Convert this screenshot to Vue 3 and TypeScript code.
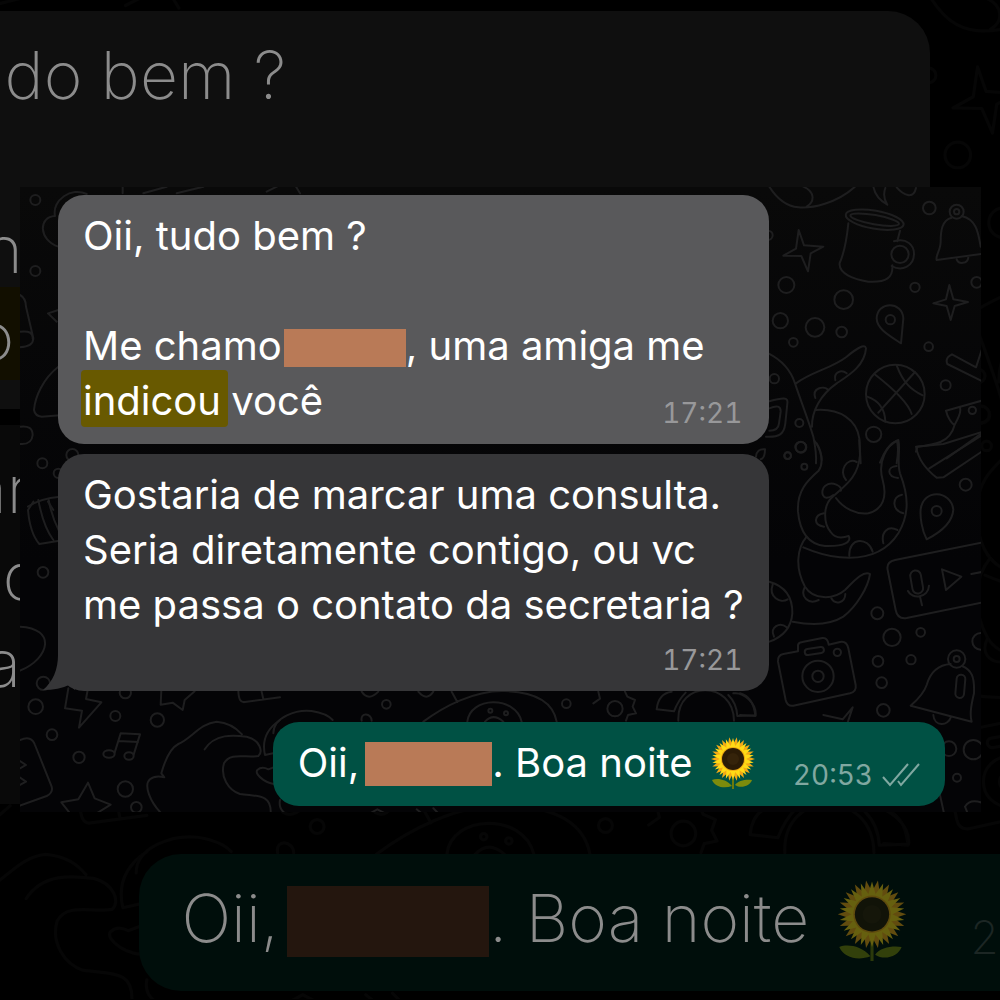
<script setup lang="ts">
type Part = { kind: 'text' | 'mark' | 'redacted' | 'flower'; value?: string }
type Message = { id: string; side: 'in' | 'out'; tone: string; time: string; lines: Part[][] }

const text = (value: string): Part => ({ kind: 'text', value })

const messages: Message[] = [
  {
    id: 'hello',
    side: 'in',
    tone: 'selected',
    time: '17:21',
    lines: [
      [text('Oii, tudo bem ?')],
      [text('\u00a0')],
      [text('Me chamo'), { kind: 'redacted' }, text(', uma amiga me')],
      [{ kind: 'mark', value: 'indicou' }, text(' você')],
    ],
  },
  {
    id: 'request',
    side: 'in',
    tone: 'plain',
    time: '17:21',
    lines: [
      [text('Gostaria de marcar uma consulta.')],
      [text('Seria diretamente contigo, ou vc')],
      [text('me passa o contato da secretaria ?')],
    ],
  },
  {
    id: 'reply',
    side: 'out',
    tone: 'sent',
    time: '20:53',
    lines: [[text('Oii,'), { kind: 'redacted' }, text('. Boa noite '), { kind: 'flower' }]],
  },
]

const layers = ['backdrop', 'panel']
const petals = Array.from({ length: 18 }, (_, i) => i * 20)
</script>

<template>
  <main class="stage">
    <svg class="defs" aria-hidden="true">
      <defs>
        <g id="doodles" fill="none" stroke-width="6" stroke-linejoin="round" stroke-linecap="round">
          <g transform="translate(740 190) scale(.33333)">
            <path d="M88-10C110 25 135 48 175 52S290 40 345-10M190-10C225 5 225 35 200 50M400-10C405 15 420 32 442 44C430 25 430 10 436-6M470-8C490 15 520 30 528-6" />
            <path d="M176 120L192 166L250 170L212 190L204 244L184 198L130 197L168 176Z" />
            <circle cx="139" cy="285" r="24" /><circle cx="311" cy="329" r="28" /><circle cx="121" cy="392" r="23" />
            <circle cx="225" cy="412" r="28" /><circle cx="305" cy="426" r="16" /><circle cx="160" cy="457" r="13" />
            <circle cx="568" cy="54" r="19" /><circle cx="525" cy="292" r="14" /><circle cx="710" cy="277" r="16" />
            <circle cx="566" cy="470" r="13" /><circle cx="617" cy="586" r="15" /><circle cx="697" cy="661" r="11" />
            <circle cx="401" cy="733" r="23" /><circle cx="178" cy="699" r="12" /><circle cx="183" cy="772" r="16" />
            <circle cx="143" cy="797" r="10" /><circle cx="103" cy="566" r="14" /><circle cx="84" cy="136" r="14" />
            <ellipse cx="404" cy="89" rx="88" ry="27" transform="rotate(10 404 89)" />
            <ellipse cx="404" cy="89" rx="74" ry="14" transform="rotate(10 404 89)" />
            <path d="M325 100C320 150 312 190 299 219C295 250 340 268 385 275C440 278 460 262 457 226M480 122L472 154" />
            <circle cx="480" cy="193" r="26" />
            <path d="M462 154C500 143 523 165 522 193C521 230 485 245 455 228" />
            <circle cx="650" cy="65" r="21" /><circle cx="650" cy="65" r="8" />
            <path d="M635 83C605 90 602 125 602 155C602 180 585 200 590 210L725 192M665 78C710 88 715 130 722 170M650 208C655 223 683 223 685 202" />
            <path d="M628 285L640 328L684 336L644 348L632 390L620 348L580 340L618 328Z" />
            <path d="M483 460C445 435 410 415 410 385C412 333 487 333 490 385Z" /><circle cx="451" cy="389" r="14" />
            <path d="M85 490C125 510 152 540 165 580C185 640 205 690 220 740C226 770 230 790 228 820M168 580C215 545 275 535 320 500C350 475 375 460 378 475C374 530 320 560 290 580C240 615 215 665 216 710M286 571C280 545 305 538 320 550M226 624C215 595 250 585 265 600M228 660C300 655 350 690 358 745L362 820M230 760Q245 785 245 810" />
            <circle cx="466" cy="612" r="88" />
            <path d="M403 552C465 600 505 640 515 672M470 526C490 580 515 600 548 616M525 546L415 668M382 620C425 635 435 665 436 695" />
            <path d="M88 634C130 622 145 622 142 640L136 700C132 735 115 742 78 740M88 655Q123 640 122 665L117 700Q115 722 88 722M725 480L708 532L636 493Q614 503 622 522L725 573M725 632L618 662C622 680 635 702 644 704C655 685 664 665 660 654M644 704C630 760 580 765 532 770L528 785M725 730L620 805M420 818Q440 765 470 752Q478 770 470 820" />
          </g>
          <g transform="translate(740 440) scale(.33333)">
            <path d="M222 0C245 30 252 70 236 92C205 120 170 150 174 215C178 260 195 312 255 318C315 320 335 305 326 288C305 295 285 295 272 276C250 250 248 195 278 170C310 140 355 115 360 45L358 0" />
            <path d="M288 174C310 205 350 225 385 220C430 208 442 170 428 120C412 65 440 15 475 0C482 30 470 65 480 100C505 165 510 220 475 280C440 335 385 360 300 352C260 348 220 335 190 322M200 290C170 325 165 385 195 440C220 480 280 480 315 450C340 425 370 390 390 402C385 440 350 500 310 530C270 555 210 555 158 545" />
            <path d="M318 120C295 95 320 50 350 66M280 165C245 190 240 150 255 138C275 120 310 140 302 152M252 260C218 255 222 225 252 220M328 348C325 290 385 290 398 335M430 310C422 275 445 255 472 270M490 220C455 210 455 170 486 164M474 114C440 110 440 80 470 78M194 442C180 470 205 495 236 480M274 475C285 495 315 490 316 462" />
            <path d="M88 425C140 440 158 475 157 520C154 560 130 590 88 605M98 434C85 470 120 492 143 478M102 590C88 560 120 545 140 562" />
            <circle cx="182" cy="21" r="16" /><circle cx="143" cy="47" r="10" /><circle cx="193" cy="80" r="9" /><circle cx="677" cy="134" r="18" />
            <path d="M48 50Q50 25 75 28Q75 55 62 58M528 20L610 12L725-24M528 20C535 60 560 90 590 113L610 112L725 35M568 85L725-14" />
            <path d="M560 298C545 270 540 230 542 208C550 145 632 150 640 208C638 245 605 275 560 298Z" /><circle cx="590" cy="213" r="15" />
            <path d="M725 308L465 360Q438 366 443 390L467 510Q472 538 500 534L725 488" />
            <rect x="514" y="391" width="32" height="70" rx="16" transform="rotate(-10 530 426)" />
            <path d="M504 453C515 478 565 475 567 437M540 470L546 496M606 388L664 410L618 450ZM694 402L725 396" />
            <circle cx="412" cy="520" r="18" /><circle cx="456" cy="592" r="26" /><circle cx="542" cy="577" r="13" /><circle cx="513" cy="659" r="14" />
            <circle cx="414" cy="664" r="16" /><circle cx="425" cy="728" r="16" /><circle cx="430" cy="811" r="19" /><circle cx="722" cy="604" r="25" />
            <path d="M130 642L174 634L174 615Q175 608 187 606L247 594Q263 592 266 614L300 606Q320 602 325 625L347 735Q350 755 330 760L160 797Q142 800 137 780L114 665Q112 646 130 642Z" />
            <rect x="194" y="624" width="58" height="18" rx="9" transform="rotate(-9 223 633)" />
            <circle cx="292" cy="637" r="11" /><circle cx="234" cy="709" r="47" /><circle cx="234" cy="709" r="17" />
            <circle cx="650" cy="657" r="26" /><circle cx="650" cy="657" r="9" />
            <path d="M632 672C590 675 570 700 560 735C550 765 520 790 512 797L695 845C688 820 695 790 702 760C704 710 695 690 666 678M580 825C582 860 625 860 633 830M250 825L308 838L338 802L322 850M0 760Q40 770 46 828L0 825" />
            <rect x="648" y="704" width="26" height="70" rx="13" transform="rotate(5 661 739)" />
          </g>
          <g transform="translate(0 180) scale(.33333)">
            <circle cx="106" cy="60" r="15" /><circle cx="106" cy="273" r="15" /><circle cx="127" cy="850" r="15" /><circle cx="217" cy="825" r="18" /><circle cx="175" cy="880" r="14" />
            <path d="M165 108C155 60 215 20 260 42M165 108C115 110 115 180 175 200M60 345Q78 355 78 380L100 475Q100 500 60 502M60 455Q100 450 98 475M175 390L144 400L170 425M175 560C130 595 105 650 102 690Q105 708 125 710L180 706M60 740Q98 735 98 765Q95 795 60 792M84 980Q120 955 180 950M144 965L160 990M368 15V40M430 40L500 20M530 40L610 20M800 35L840 15M885 15L900 40" />
          </g>
          <g transform="translate(0 500) scale(.33333)">
            <path d="M84 30Q90 100 118 132L178 122M84 30L100 5M115 0Q130 80 160 120M146 0Q155 50 178 95M60 380C170 385 150 475 60 512" />
            <circle cx="129" cy="217" r="16" /><circle cx="130" cy="550" r="20" /><circle cx="107" cy="620" r="22" /><circle cx="156" cy="704" r="16" />
            <circle cx="237" cy="772" r="17" /><circle cx="376" cy="867" r="23" /><circle cx="409" cy="922" r="16" /><circle cx="346" cy="648" r="15" /><circle cx="472" cy="660" r="20" /><circle cx="376" cy="578" r="17" />
            <path d="M205 565L195 625L246 632L237 683L304 607L258 597L263 570M484 570L482 614L518 608L548 630L554 600L584 574M715 570Q715 610 735 606L840 592M785 575L790 598" />
            <ellipse cx="327" cy="762" rx="17" ry="11" /><ellipse cx="387" cy="768" rx="14" ry="11" />
            <path d="M344 758L362 700L420 703L401 764M355 723L414 726M60 720Q95 705 105 735L155 860Q160 878 140 888L60 917M60 783L78 795L60 805M60 833L78 845L60 855" />
            <path d="M184 907L235 898L264 848L284 895L332 914L290 940M184 907L210 940M484 940C450 905 430 855 450 838Q465 825 493 832L484 820C495 780 510 745 535 732C575 715 600 670 650 665C690 668 710 685 726 703M614 748C645 700 700 705 740 710C780 720 790 755 775 768C740 775 690 755 672 790C660 830 685 870 720 882C770 890 815 880 812 940M840 660Q780 700 795 765L840 755M840 850C810 860 760 825 772 810Q785 798 805 808L840 795" />
          </g>
          <g transform="translate(270 640) scale(.33333)">
            <path d="M10 280C10 230 80 208 125 213Q170 220 188 240M460 245C520 200 610 152 700 153C800 155 850 190 860 245M545 155L562 186M592 245C600 170 735 165 755 245M645 245Q670 218 700 245M275 155Q295 185 325 155M445 155Q470 185 490 155M275 242C270 215 305 220 305 242M30 480Q25 505 45 520M300 520L322 508L345 520M440 508L455 520M490 505L505 520" />
            <circle cx="349" cy="193" r="13" /><circle cx="889" cy="191" r="13" /><circle cx="661" cy="212" r="6" /><circle cx="708" cy="220" r="6" />
          </g>
          <g transform="translate(600 640) scale(.33333)">
            <circle cx="45" cy="206" r="23" /><circle cx="1047" cy="326" r="22" /><circle cx="1120" cy="329" r="29" /><circle cx="1071" cy="413" r="12" />
            <path d="M-20 190L0 176L-5 155M75 155L82 170L105 180L98 200L108 220L84 225L78 242M215 155Q175 160 170 208L222 214Q235 180 257 158M235 242C230 120 400 120 402 242M385 165Q410 190 412 228L467 226C470 190 430 155 400 160M1020 465L1032 520M1095 500Q1110 475 1145 488M1095 500L1103 520" />
          </g>
        </g>
        <symbol id="sunflower" viewBox="0 0 46 52">
          <path d="M22 37h2v15h-2z" fill="#6c7a0b" />
          <path d="M22 49C16 42 7 41 2 43C5 50 14 52 22 49ZM25 48C28 43 37 42 42 43C40 49 31 52 25 48Z" fill="#7d8b0c" />
          <path v-for="angle in petals" :key="angle" d="M18 15L23 0L28 15Z" fill="#f4a915" :transform="`rotate(${angle + 10} 23 22)`" />
          <path v-for="angle in petals" :key="`top-${angle}`" d="M19 15L23 1L27 15Z" fill="#ffda16" :transform="`rotate(${angle} 23 22)`" />
          <circle cx="23" cy="22" r="12" fill="#eea812" />
          <circle cx="23" cy="22" r="11" fill="#2b1b06" />
          <circle cx="23" cy="22" r="6" fill="#35230a" />
        </symbol>
      </defs>
    </svg>

    <section v-for="layer in layers" :key="layer" class="layer" :class="layer" :aria-hidden="layer === 'backdrop'">
      <svg class="pattern" viewBox="20 187 961 625" preserveAspectRatio="xMidYMin slice" aria-hidden="true">
        <use href="#doodles" />
      </svg>
      <article v-for="message in messages" :key="message.id" class="bubble" :class="[message.side, message.tone]">
        <svg v-if="message.tone === 'plain'" class="tail" viewBox="0 0 32 36" aria-hidden="true">
          <path d="M15 0Q15 22 0 35Q16 35 26 30L32 35V0Z" />
        </svg>
        <div class="body">
          <p v-for="(line, i) in message.lines" :key="i" class="line">
            <template v-for="(part, j) in line" :key="j">
              <span v-if="part.kind === 'text'">{{ part.value }}</span>
              <mark v-else-if="part.kind === 'mark'">{{ part.value }}</mark>
              <span v-else-if="part.kind === 'redacted'" class="redacted"></span>
              <svg v-else class="flower" role="img" aria-label="Girassol"><use href="#sunflower" /></svg>
            </template>
          </p>
        </div>
        <footer class="meta">
          <time>{{ message.time }}</time>
          <svg v-if="message.side === 'out'" class="checks" viewBox="0 0 38 26" aria-hidden="true">
            <path d="M1 15L8 23L26 2M16 19L19 23L37 2" />
          </svg>
        </footer>
      </article>
    </section>
  </main>
</template>

<style>
body {
  background: #000;
}
</style>

<style scoped>
.stage {
  position: relative;
  min-height: 100vh;
  box-sizing: border-box;
  padding: 187px 19px 0 20px;
  overflow: hidden;
  background: #000;
  font-family: Inter, "Liberation Sans", sans-serif;
}

.defs {
  position: absolute;
  width: 0;
  height: 0;
}

.layer {
  position: relative;
  display: flex;
  flex-direction: column;
  align-items: flex-start;
  box-sizing: border-box;
  overflow: hidden;
}

.panel {
  --line: 55px;
  --pad-top: 13px;
  --pad-bottom: 16px;
  --pad-left: 25px;
  --pad-right: 27px;
  --meta-line: 30px;
  --radius: 26px;
  padding: 8px 36px 6px 38px;
  background: linear-gradient(#090909, #040406 60%);
  color: #fff;
  font-size: 40px;
}

.backdrop {
  --line: 87px;
  --pad-top: 21px;
  --pad-bottom: 29px;
  --pad-left: 40px;
  --pad-right: 45px;
  --meta-line: 50px;
  --radius: 42px;
  position: absolute;
  top: -2px;
  left: -269px;
  right: -269px;
  padding: 13px 58px 8px 61px;
  color: #8c8c8c;
  font-size: 66px;
  font-weight: 200;
}

.pattern {
  position: absolute;
  inset: 0;
  width: 100%;
  height: 100%;
  stroke: #1e1e1f;
}

.backdrop .pattern {
  stroke: #060606;
}

.bubble {
  position: relative;
  display: grid;
  grid-template-columns: 100%;
  box-sizing: border-box;
  padding: var(--pad-top) var(--pad-right) var(--pad-bottom) var(--pad-left);
  border-radius: var(--radius);
}

.in {
  width: 80.2%;
}

.selected {
  background: #59595b;
}

.plain {
  margin-top: 10px;
  row-gap: 13px;
  background: #363638;
}

.sent {
  align-self: flex-end;
  display: flex;
  align-items: flex-end;
  gap: 37px;
  margin-top: 31px;
  padding-right: 25px;
  background: #005144;
}

.body,
.meta {
  grid-column: 1;
}

.selected .body,
.selected .meta {
  grid-row: 1;
}

.line {
  height: var(--line);
  margin: 0;
  line-height: var(--line);
  white-space: pre;
}

mark {
  margin: 0 -8px 0 -2px;
  padding: 6px 7px 2px 2px;
  border-radius: 4px;
  background: #685900;
  color: inherit;
}

.redacted {
  display: inline-block;
  width: 122px;
  height: 38px;
  margin: 0 0 2px 2px;
  vertical-align: middle;
  background: #b97a57;
}

.sent .redacted {
  width: 127px;
  height: 44px;
  margin: 0 0 4px 6px;
}

.flower {
  width: 46px;
  height: 52px;
  margin: 0 0 6px 6px;
  vertical-align: middle;
}

.meta {
  display: flex;
  align-items: center;
  align-self: end;
  justify-self: end;
  gap: 9px;
  color: #98989a;
  font-size: 28px;
  font-variant-numeric: tabular-nums;
  line-height: var(--meta-line);
}

.sent .meta {
  color: #80a8a1;
}

.checks {
  width: 38px;
  height: 26px;
  fill: none;
  stroke: currentColor;
  stroke-width: 2;
}

.tail {
  position: absolute;
  left: -15px;
  bottom: 0;
  width: 32px;
  height: 36px;
  fill: #363638;
}

.backdrop .selected {
  background: #0f0f0f;
}

.backdrop .plain {
  margin-top: 16px;
  row-gap: 18px;
  background: #090909;
}

.backdrop .sent {
  gap: 62px;
  margin-top: 50px;
  padding-left: 42px;
  padding-right: 40px;
  background: #000e0b;
}

.backdrop mark {
  padding: 9px 8px 4px 2px;
  background: #120f00;
}

.backdrop .redacted {
  width: 195px;
  height: 61px;
  margin-left: 8px;
  background: #24160e;
}

.backdrop .sent .redacted {
  width: 202px;
  height: 71px;
  margin-left: 8px;
}

.backdrop .flower {
  width: 72px;
  height: 81px;
  margin-left: 8px;
  opacity: 0.4;
}

.backdrop .meta {
  color: #1c2624;
  font-size: 46px;
}

.backdrop .checks {
  width: 61px;
  height: 42px;
}

.backdrop .tail {
  left: -24px;
  width: 51px;
  height: 58px;
  fill: #090909;
}
</style>
